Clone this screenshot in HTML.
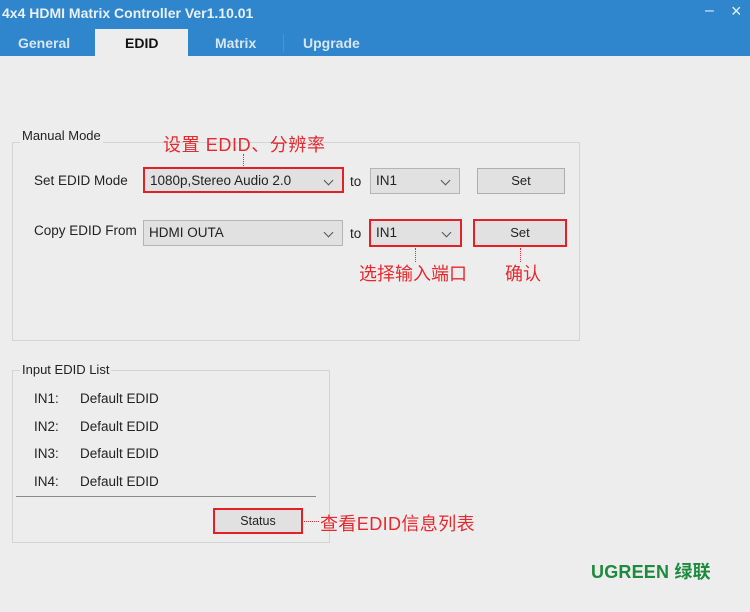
<!DOCTYPE html>
<html><head><meta charset="utf-8"><style>
*{margin:0;padding:0;box-sizing:border-box}
body{width:750px;height:612px;background:#ededed;position:relative;overflow:hidden;font-family:"Liberation Sans","Noto Sans CJK SC",sans-serif;color:#222}
.a{position:absolute;white-space:nowrap}
.top{left:0;top:0;width:750px;height:56px;background:#2f86cc}
.t{color:#e8f0f8;font-weight:bold;font-size:14px}
.tab{color:#d8e6f4;font-weight:bold;font-size:14px}
.box{border:1px solid #d4d4d4}
.lg{background:#ededed;font-size:13px;padding:0 2px;color:#222}
.cb{background:#e1e1e1;border:1px solid #b4b4b4;font-size:13.5px;padding:4px 5px;height:26px}
.cb:after{content:"";position:absolute;right:10px;top:8px;width:6px;height:6px;border-right:1.3px solid #555;border-bottom:1.3px solid #555;transform:rotate(45deg)}
.btn{background:#e1e1e1;border:1px solid #adadad;font-size:13px;text-align:center;line-height:24px}
.red{border:2px solid #e41f25}
.rt{color:#e8282d;font-size:18px}
.dv{border-left:1.5px dotted #e8282d;width:0}
.lb{font-size:13.5px}
</style></head><body>
<div class="a top"></div>
<div class="a t" style="left:2px;top:5px">4x4 HDMI Matrix Controller Ver1.10.01</div>
<div class="a" style="left:705px;top:2px;color:#e8f0f8;font-size:16px">–</div>
<div class="a" style="left:731px;top:1px;color:#e8f0f8;font-size:18px">×</div>
<div class="a tab" style="left:18px;top:35px">General</div>
<div class="a" style="left:95px;top:29px;width:93px;height:28px;background:#ededed"></div>
<div class="a" style="left:125px;top:35px;font-size:14px;font-weight:bold;color:#111">EDID</div>
<div class="a tab" style="left:215px;top:35px">Matrix</div>
<div class="a" style="left:283px;top:34px;width:1px;height:18px;background:#4a94d2"></div>
<div class="a tab" style="left:303px;top:35px">Upgrade</div>

<div class="a box" style="left:12px;top:142px;width:568px;height:199px"></div>
<div class="a lg" style="left:20px;top:128px">Manual Mode</div>
<div class="a rt" style="left:163px;top:131px;letter-spacing:0.6px">设置 EDID、分辨率</div>
<div class="a dv" style="left:243px;top:154px;height:14px"></div>
<div class="a lb" style="left:34px;top:173px">Set EDID Mode</div>
<div class="a cb red" style="left:143px;top:167px;width:201px">1080p,Stereo Audio 2.0</div>
<div class="a lb" style="left:350px;top:174px">to</div>
<div class="a cb" style="left:370px;top:168px;width:90px">IN1</div>
<div class="a btn" style="left:477px;top:168px;width:88px;height:26px">Set</div>

<div class="a lb" style="left:34px;top:223px">Copy EDID From</div>
<div class="a cb" style="left:143px;top:220px;width:200px">HDMI OUTA</div>
<div class="a lb" style="left:350px;top:226px">to</div>
<div class="a cb red" style="left:369px;top:219px;width:93px;height:28px">IN1</div>
<div class="a btn red" style="left:473px;top:219px;width:94px;height:28px">Set</div>
<div class="a dv" style="left:415px;top:248px;height:14px"></div>
<div class="a dv" style="left:520px;top:248px;height:14px"></div>
<div class="a rt" style="left:359px;top:260px">选择输入端口</div>
<div class="a rt" style="left:505px;top:260px">确认</div>

<div class="a box" style="left:12px;top:370px;width:318px;height:173px"></div>
<div class="a lg" style="left:20px;top:362px">Input EDID List</div>
<div class="a lb" style="left:34px;top:391px">IN1:</div><div class="a lb" style="left:80px;top:391px">Default EDID</div>
<div class="a lb" style="left:34px;top:419px">IN2:</div><div class="a lb" style="left:80px;top:419px">Default EDID</div>
<div class="a lb" style="left:34px;top:446px">IN3:</div><div class="a lb" style="left:80px;top:446px">Default EDID</div>
<div class="a lb" style="left:34px;top:474px">IN4:</div><div class="a lb" style="left:80px;top:474px">Default EDID</div>
<div class="a" style="left:16px;top:496px;width:300px;height:1px;background:#8a8a8a"></div>
<div class="a btn red" style="left:213px;top:508px;width:90px;height:26px;font-size:12.5px;line-height:23px">Status</div>
<div class="a" style="left:304px;top:521px;width:15px;border-top:1.5px dotted #e8282d"></div>
<div class="a rt" style="left:320px;top:510px;letter-spacing:0.4px">查看EDID信息列表</div>

<div class="a" style="left:591px;top:558px;color:#1d8a3c;font-weight:bold;font-size:18px;letter-spacing:0.2px">UGREEN 绿联</div>
</body></html>
